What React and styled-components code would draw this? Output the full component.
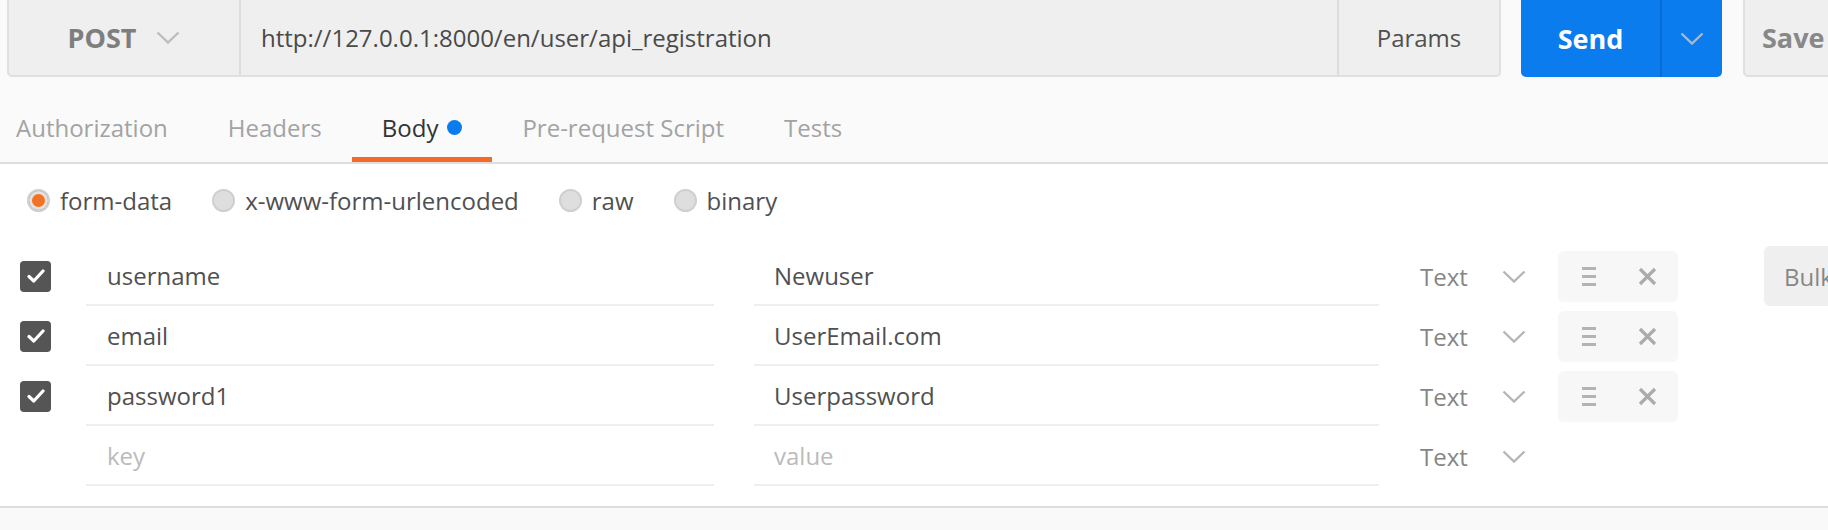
import styled, { createGlobalStyle } from "styled-components";

const GlobalStyle = createGlobalStyle`
  body {
    margin: 0;
    background: #fff;
    font-family: "Open Sans", "Liberation Sans", sans-serif;
  }
`;

const rows = [
  { key: "username", value: "Newuser", on: true },
  { key: "email", value: "UserEmail.com", on: true },
  { key: "password1", value: "Userpassword", on: true },
  { key: "", value: "", on: false, empty: true },
];

const tabs = ["Authorization", "Headers", "Body", "Pre-request Script", "Tests"];
const bodyModes = ["form-data", "x-www-form-urlencoded", "raw", "binary"];

function Chevron({ color = "#bdbdbd", w = 24 }) {
  return (
    <svg width={w} height={w / 2 + 1} viewBox="0 0 24 13" fill="none">
      <polyline points="1.5,1.5 12,11.5 22.5,1.5" stroke={color} strokeWidth="2.4" />
    </svg>
  );
}

function Check() {
  return (
    <svg width="18" height="14" viewBox="0 0 18 14" fill="none">
      <polyline points="2,7.5 6.8,12 16,2" stroke="#fff" strokeWidth="3.2" strokeLinecap="round" strokeLinejoin="round" />
    </svg>
  );
}

function Bars() {
  return (
    <svg width="14" height="19" viewBox="0 0 14 19">
      <rect x="0" y="0" width="14" height="3" fill="#b3b3b3" />
      <rect x="0" y="8" width="14" height="3" fill="#b3b3b3" />
      <rect x="0" y="16" width="14" height="3" fill="#b3b3b3" />
    </svg>
  );
}

function Cross() {
  return (
    <svg width="19" height="19" viewBox="0 0 19 19" fill="none">
      <path d="M2 2 L17 17 M17 2 L2 17" stroke="#ababab" strokeWidth="3.2" />
    </svg>
  );
}

export default function App() {
  return (
    <Page>
      <GlobalStyle />
      <Top>
        <UrlRow>
          <UrlGroup>
            <Method>
              <span>POST</span>
              <Chevron />
            </Method>
            <UrlText>http://127.0.0.1:8000/en/user/api_registration</UrlText>
            <Params>Params</Params>
          </UrlGroup>
          <Send>
            <SendMain>Send</SendMain>
            <SendArrow>
              <Chevron color="#a9b9cc" />
            </SendArrow>
          </Send>
          <Save>Save</Save>
        </UrlRow>
        <TabBar>
          {tabs.map((t) => (
            <Tab key={t} $active={t === "Body"}>
              {t}
              {t === "Body" && <Dot />}
            </Tab>
          ))}
        </TabBar>
      </Top>

      <BodyPane>
        <Modes>
          {bodyModes.map((m, i) => (
            <Mode key={m}>
              <Radio $checked={i === 0} />
              {m}
            </Mode>
          ))}
        </Modes>

        <Editor>
          <Table>
            {rows.map((r, i) => (
              <Row key={i}>
                <CheckCell>{r.on && <CheckBox><Check /></CheckBox>}</CheckCell>
                <KeyCell $placeholder={r.empty}>{r.empty ? "key" : r.key}</KeyCell>
                <ValueCell $placeholder={r.empty}>{r.empty ? "value" : r.value}</ValueCell>
                <TypeCell>
                  Text
                  <Chevron color="#b5b5b5" />
                </TypeCell>
                {!r.empty && (
                  <Actions>
                    <Bars />
                    <Cross />
                  </Actions>
                )}
              </Row>
            ))}
          </Table>
          <Bulk>Bulk Edit</Bulk>
        </Editor>
      </BodyPane>
      <Footer />
    </Page>
  );
}

const Page = styled.div`
  width: 1828px;
  height: 530px;
  overflow: hidden;
  display: flex;
  flex-direction: column;
  font-size: 24px;
  color: #505050;
`;

const Top = styled.div`
  background: #fafafa;
  border-bottom: 2px solid #dedede;
`;

const UrlRow = styled.div`
  display: flex;
  height: 77px;
  padding-left: 7px;
  white-space: nowrap;
  & > * {
    flex-shrink: 0;
  }
`;

const UrlGroup = styled.div`
  width: 1494px;
  display: flex;
  box-sizing: border-box;
  background: #efefef;
  border: 2px solid #e0e0e0;
  border-top: none;
  border-radius: 0 0 5px 5px;
`;

const Method = styled.div`
  width: 230px;
  display: flex;
  align-items: center;
  justify-content: center;
  gap: 20px;
  border-right: 2px solid #dcdcdc;
  font-size: 27px;
  font-weight: 700;
  color: #7e7e7e;
`;

const UrlText = styled.div`
  flex: 1;
  display: flex;
  align-items: center;
  padding-left: 20px;
  color: #4a4a4a;
`;

const Params = styled.div`
  width: 160px;
  display: flex;
  align-items: center;
  justify-content: center;
  border-left: 2px solid #dcdcdc;
  color: #505050;
`;

const Send = styled.div`
  margin-left: 20px;
  width: 201px;
  display: flex;
  background: #0a7ced;
  border-radius: 0 0 5px 5px;
`;

const SendMain = styled.div`
  width: 139px;
  display: flex;
  align-items: center;
  justify-content: center;
  color: #fff;
  font-size: 27px;
  font-weight: 700;
`;

const SendArrow = styled.div`
  flex: 1;
  display: flex;
  align-items: center;
  justify-content: center;
  border-left: 2px solid #0a6bd0;
`;

const Save = styled.div`
  margin-left: 21px;
  width: 140px;
  box-sizing: border-box;
  display: flex;
  align-items: center;
  padding-left: 17px;
  background: #efefef;
  border: 2px solid #e0e0e0;
  border-top: none;
  border-radius: 0 0 5px 5px;
  color: #888;
  font-size: 27px;
  font-weight: 700;
`;

const TabBar = styled.div`
  display: flex;
  height: 85px;
  padding-left: 16px;
`;

const Tab = styled.div`
  display: flex;
  align-items: center;
  box-sizing: border-box;
  padding: 20px 30px 0;
  border-bottom: 5px solid ${(p) => (p.$active ? "#f26b22" : "transparent")};
  color: ${(p) => (p.$active ? "#333" : "#a3a3a3")};
  &:first-child {
    padding-left: 0;
  }
`;

const Dot = styled.span`
  width: 15px;
  height: 15px;
  margin-left: 9px;
  border-radius: 50%;
  background: #0a7ced;
`;

const BodyPane = styled.div`
  padding-bottom: 20px;
  border-bottom: 2px solid #dedede;
`;

const Modes = styled.div`
  display: flex;
  align-items: center;
  height: 34px;
  padding: 19px 0 0 27px;
  gap: 40px;
`;

const Mode = styled.div`
  display: flex;
  align-items: center;
  gap: 10px;
  color: #505050;
`;

const Radio = styled.span`
  width: 23px;
  height: 23px;
  box-sizing: border-box;
  border-radius: 50%;
  border: 2px solid #cfcfcf;
  background: ${(p) => (p.$checked ? "#f47023" : "#dedede")};
  box-shadow: ${(p) => (p.$checked ? "inset 0 0 0 3px #e2e2e2" : "none")};
`;

const Editor = styled.div`
  display: flex;
  align-items: flex-start;
  padding: 29px 0 0 20px;
`;

const Table = styled.div`
  width: 1658px;
  flex-shrink: 0;
  display: flex;
  flex-direction: column;
`;

const Row = styled.div`
  display: flex;
  align-items: center;
  height: 60px;
  & > * {
    flex-shrink: 0;
  }
`;

const CheckCell = styled.div`
  width: 66px;
  display: flex;
  align-items: center;
`;

const CheckBox = styled.span`
  width: 31px;
  height: 31px;
  border-radius: 4px;
  background: #555;
  display: flex;
  align-items: center;
  justify-content: center;
`;

const KeyCell = styled.div`
  width: 628px;
  height: 60px;
  box-sizing: border-box;
  display: flex;
  align-items: center;
  padding-left: 21px;
  border-bottom: 2px solid #efefef;
  color: ${(p) => (p.$placeholder ? "#bbb" : "#505050")};
`;

const ValueCell = styled(KeyCell)`
  width: 625px;
  margin-left: 40px;
  padding-left: 20px;
`;

const TypeCell = styled.div`
  width: 179px;
  box-sizing: border-box;
  display: flex;
  align-items: center;
  gap: 34px;
  padding-left: 41px;
  color: #868686;
`;

const Actions = styled.div`
  width: 120px;
  height: 51px;
  box-sizing: border-box;
  display: flex;
  align-items: center;
  gap: 42px;
  padding-left: 24px;
  background: #f7f7f7;
  border-radius: 6px;
`;

const Bulk = styled.div`
  margin-left: 86px;
  height: 60px;
  width: 140px;
  flex-shrink: 0;
  box-sizing: border-box;
  display: flex;
  align-items: center;
  padding-left: 20px;
  background: #efefef;
  border-radius: 6px;
  color: #868686;
  white-space: nowrap;
`;

const Footer = styled.div`
  flex: 1;
  background: #f9f9f9;
`;
